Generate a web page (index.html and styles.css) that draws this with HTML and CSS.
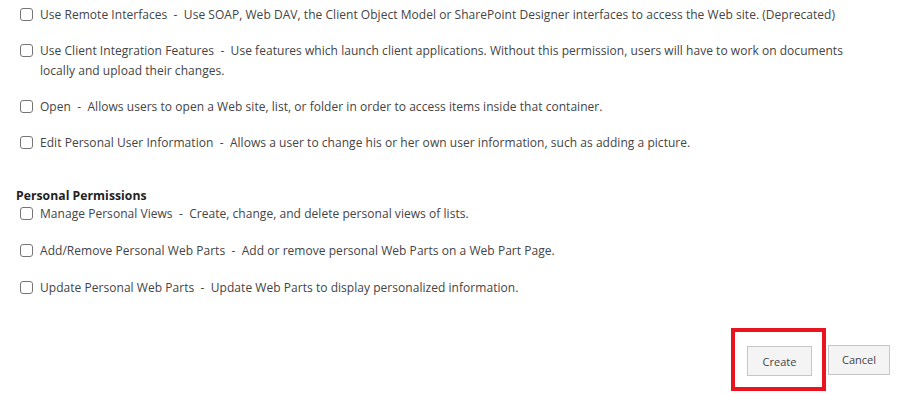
FILE: index.html
```html
<!DOCTYPE html>
<html>
<head>
<meta charset="utf-8">
<title>Permissions</title>
<link rel="stylesheet" href="styles.css">
</head>
<body>
<div class="page">
  <div class="group">
    <label class="perm"><span class="box"></span><span class="txt">Use Remote Interfaces&nbsp; - &nbsp;Use SOAP, Web DAV, the Client Object Model or SharePoint Designer interfaces to access the Web site. (Deprecated)</span></label>
    <label class="perm"><span class="box"></span><span class="txt">Use Client Integration Features&nbsp; - &nbsp;Use features which launch client applications. Without this permission, users will have to work on documents locally and upload their changes.</span></label>
    <label class="perm"><span class="box"></span><span class="txt">Open&nbsp; - &nbsp;Allows users to open a Web site, list, or folder in order to access items inside that container.</span></label>
    <label class="perm"><span class="box"></span><span class="txt">Edit Personal User Information&nbsp; - &nbsp;Allows a user to change his or her own user information, such as adding a picture.</span></label>
  </div>

  <div class="group personal">
    <h3>Personal Permissions</h3>
    <label class="perm"><span class="box"></span><span class="txt">Manage Personal Views&nbsp; - &nbsp;Create, change, and delete personal views of lists.</span></label>
    <label class="perm"><span class="box"></span><span class="txt">Add/Remove Personal Web Parts&nbsp; - &nbsp;Add or remove personal Web Parts on a Web Part Page.</span></label>
    <label class="perm"><span class="box"></span><span class="txt">Update Personal Web Parts&nbsp; - &nbsp;Update Web Parts to display personalized information.</span></label>
  </div>

  <div class="actions">
    <div class="mark"><button class="btn create">Create</button></div>
    <button class="btn cancel">Cancel</button>
  </div>
</div>
</body>
</html>
```

FILE: styles.css
```css
*{
  margin:0px;
  padding:0px;
  box-sizing:border-box;
}
body{
  background:#ffffff;
  font-family:"Open Sans", "Noto Sans", Arial, sans-serif;
  font-size:12px;
  letter-spacing:0.04px;
  color:#444444;
}
.page{
  width:900px;
  height:395px;
  padding:5px 0 0 20px;
}
.group{
  width:840px;
}
.perm{
  display:flex;
  align-items:flex-start;
  line-height:20px;
  margin-bottom:16px;
}
.box{
  flex:none;
  width:13px;
  height:13px;
  margin:3px 7px 0 0;
  border:1px solid #767676;
  border-radius:3px;
  background:#ffffff;
}
.txt{
  flex:1;
}
.personal{
  margin-top:35px;
}
.personal h3{
  margin-left:-4px;
  font-size:12.2px;
  font-weight:700;
  color:#222222;
  line-height:16px;
}
.personal .perm{
  margin-bottom:17px;
}
.actions{
  display:flex;
  justify-content:flex-end;
  align-items:center;
  padding-right:10px;
  margin-top:30px;
}
.mark{
  border:4px solid #e8141f;
  padding:14px 10px 11px 12px;
  margin-right:2px;
}
.btn{
  height:30px;
  padding:0;
  background:#f4f4f4;
  border:1px solid #c6c6c6;
  font-family:"Open Sans", "Noto Sans", Arial, sans-serif;
  font-size:11px;
  color:#444444;
}
.create{
  width:65px;
}
.cancel{
  width:62px;
}
```
